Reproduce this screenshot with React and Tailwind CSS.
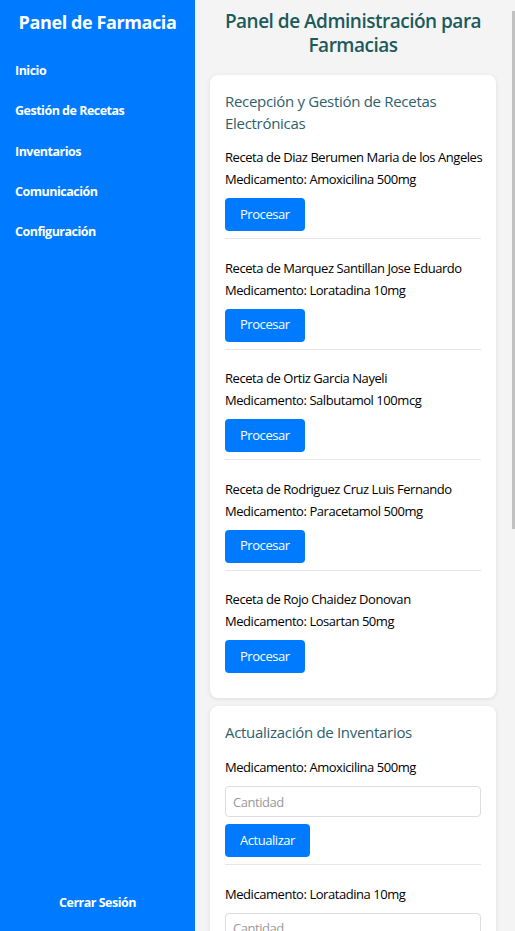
const recetas = [
  { paciente: 'Diaz Berumen Maria de los Angeles', medicamento: 'Amoxicilina 500mg' },
  { paciente: 'Marquez Santillan Jose Eduardo', medicamento: 'Loratadina 10mg' },
  { paciente: 'Ortiz Garcia Nayeli', medicamento: 'Salbutamol 100mcg' },
  { paciente: 'Rodriguez Cruz Luis Fernando', medicamento: 'Paracetamol 500mg' },
  { paciente: 'Rojo Chaidez Donovan', medicamento: 'Losartan 50mg' },
]

const inventario = ['Amoxicilina 500mg', 'Loratadina 10mg', 'Salbutamol 100mcg']

const navItems = ['Inicio', 'Gestión de Recetas', 'Inventarios', 'Comunicación', 'Configuración']

export default function App() {
  return (
    <div className="flex h-screen overflow-hidden font-['Open_Sans',sans-serif] text-[13px] text-black bg-[#f4f4f4]">
      {/* Sidebar */}
      <aside className="w-[195px] shrink-0 bg-[#007bff] text-white flex flex-col">
        <h1 className="text-center text-[18px] font-bold leading-[24px] pt-[10px] tracking-[-0.4px]">Panel de Farmacia</h1>
        <nav className="flex flex-col pt-[17px] px-[15px]">
          {navItems.map(item => (
            <a key={item} href="#" className="font-bold text-[12.5px] leading-[20.25px] py-[10px] tracking-[-0.5px]">{item}</a>
          ))}
        </nav>
        <div className="mt-auto pb-[18px] text-center font-bold text-[12.5px] leading-[20px] tracking-[-0.5px]">Cerrar Sesión</div>
      </aside>

      {/* Main */}
      <main className="flex-1 overflow-hidden pl-[15px] pr-[16px] tracking-[-0.45px]">
        <h2 className="text-center text-[19px] font-semibold leading-[24px] text-[#1c5a5c] pt-[9px] pb-[18px] tracking-[-0.5px]">
          Panel de Administración para Farmacias
        </h2>

        <section className="bg-white rounded-[8px] shadow-[0_1px_4px_rgba(0,0,0,0.1)] px-[15px] pt-[15px] pb-[18px] mb-[8px]">
          <h3 className="text-[15px] leading-[22px] text-[#2e5f6c] tracking-[-0.3px]">Recepción y Gestión de Recetas Electrónicas</h3>
          {recetas.map((r, i) => (
            <div key={r.paciente} className={`pb-[7px] ${i === 0 ? 'pt-[12px]' : 'pt-[17.5px]'} ${i === recetas.length - 1 ? '' : 'border-b border-[#e6e6e6]'}`}>
              <p className="leading-[22px] whitespace-nowrap">Receta de {r.paciente}</p>
              <p className="leading-[22px]">Medicamento: {r.medicamento}</p>
              <button className="mt-[8px] h-[33px] px-[15px] bg-[#007bff] text-white rounded-[4px] text-[13px] tracking-[-0.45px]">Procesar</button>
            </div>
          ))}
        </section>

        <section className="bg-white rounded-[8px] shadow-[0_1px_4px_rgba(0,0,0,0.1)] px-[15px] pt-[15px] pb-[18px] mb-[8px]">
          <h3 className="text-[15px] leading-[22px] text-[#2e5f6c] tracking-[-0.3px]">Actualización de Inventarios</h3>
          {inventario.map((m, i) => (
            <div key={m} className={`pb-[7px] ${i === 0 ? 'pt-[13px]' : 'pt-[17.5px]'} ${i === inventario.length - 1 ? '' : 'border-b border-[#e6e6e6]'}`}>
              <p className="leading-[22px]">Medicamento: {m}</p>
              <input placeholder="Cantidad" className="mt-[8px] block w-full h-[31px] px-[7px] border border-[#dddddd] rounded-[4px] text-[13px] tracking-[-0.45px] placeholder:text-[#999]" />
              <button className="mt-[7px] h-[33px] px-[15px] bg-[#007bff] text-white rounded-[4px] text-[13px] tracking-[-0.45px]">Actualizar</button>
            </div>
          ))}
        </section>
      </main>

      {/* scrollbar */}
      <div className="w-[3px] shrink-0 pt-[11px]">
        <div className="h-[518px] bg-[#c1c1c1]"></div>
      </div>
    </div>
  )
}
